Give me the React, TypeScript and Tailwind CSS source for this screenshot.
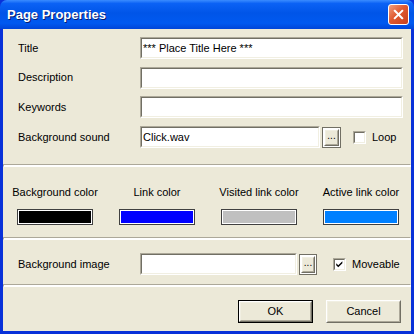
import React from "react";

const font = { fontFamily: '"Liberation Sans", Arial, sans-serif' };

function Sunken({ className = "", children }: { className?: string; children?: React.ReactNode }) {
  return (
    <div className={`border border-t-[#ACA899] border-l-[#ACA899] border-b-white border-r-white ${className}`}>
      <div className="h-full w-full border border-t-[#716F64] border-l-[#716F64] border-b-[#F1EFE2] border-r-[#F1EFE2] bg-white">
        {children}
      </div>
    </div>
  );
}

function TextBox({ className = "", value }: { className?: string; value?: string }) {
  return (
    <Sunken className={`h-[22px] ${className}`}>
      <div className="flex h-full items-center pl-[1px] text-[11px] leading-none text-black">
        {value}
      </div>
    </Sunken>
  );
}

function Raised({ className = "", children }: { className?: string; children?: React.ReactNode }) {
  return (
    <div className={`border border-t-white border-l-white border-b-[#716F64] border-r-[#716F64] ${className}`}>
      <div className="flex h-full w-full items-center justify-center border border-t-[#F1EFE2] border-l-[#F1EFE2] border-b-[#ACA899] border-r-[#ACA899] bg-[#ECE9D8]">
        {children}
      </div>
    </div>
  );
}

function Browse({ className = "" }: { className?: string }) {
  return (
    <div className={`border border-[#716F64] bg-white p-[1px] ${className}`}>
      <Raised className="h-full w-full">
        <span className="pb-[3px] text-[10px] leading-none text-black">...</span>
      </Raised>
    </div>
  );
}

function Check({ checked }: { checked?: boolean }) {
  return (
    <Sunken className="h-[13px] w-[13px]">
      {checked && (
        <svg viewBox="0 0 11 11" className="h-full w-full">
          <path d="M1.5 4 L4 6.5 L9 1.5 L9 4 L4 9 L1.5 6.5 Z" fill="#000" />
        </svg>
      )}
    </Sunken>
  );
}

function Separator() {
  return (
    <div className="h-[3px] w-full border border-[#ACA899] border-r-white border-b-white bg-white" />
  );
}

function Swatch({ color }: { color: string }) {
  return (
    <div className="h-[16px] w-[76px] border border-[#404040] bg-white p-[1px]">
      <div className="h-full w-full" style={{ backgroundColor: color }} />
    </div>
  );
}

const colors = [
  { label: "Background color", color: "#000000" },
  { label: "Link color", color: "#0000FF" },
  { label: "Visited link color", color: "#C0C0C0" },
  { label: "Active link color", color: "#0080FF" },
];

export default function App() {
  return (
    <div className="flex h-[334px] w-[414px] flex-col overflow-hidden bg-[#0831D9] text-[11px] text-black" style={font}>
      {/* Title bar */}
      <div className="flex h-[29px] shrink-0 items-center justify-between rounded-t-[7px] bg-[linear-gradient(180deg,#3A8CFF_0%,#0B62F5_12%,#0055E8_45%,#0059F0_80%,#0045D8_100%)] pl-[7px] pr-[5px]">
        <span className="text-[13px] font-bold text-white [text-shadow:1px_1px_#0A1E6E]">Page Properties</span>
        <div className="flex h-[21px] w-[21px] items-center justify-center rounded-[3px] border border-white bg-[linear-gradient(135deg,#F0A080_0%,#E05A30_45%,#C8401C_100%)]">
          <svg viewBox="0 0 12 12" className="h-[11px] w-[11px]">
            <path d="M2 2 L10 10 M10 2 L2 10" stroke="#fff" strokeWidth="2.2" strokeLinecap="square" />
          </svg>
        </div>
      </div>

      {/* Body */}
      <div className="mx-[3px] mb-[3px] flex flex-1 flex-col bg-[#ECE9D8]">
        <div className="flex flex-col gap-[7.7px] pt-[8px] pr-[8px]">
          {[
            { label: "Title", value: "*** Place Title Here ***" },
            { label: "Description" },
            { label: "Keywords" },
          ].map((r) => (
            <div key={r.label} className="flex items-center">
              <span className="w-[137px] shrink-0 pl-[15px]">{r.label}</span>
              <TextBox className="flex-1" value={r.value} />
            </div>
          ))}
          <div className="flex items-center">
            <span className="w-[137px] shrink-0 pl-[15px]">Background sound</span>
            <TextBox className="w-[180px]" value="Click.wav" />
            <Browse className="ml-[2px] h-[21px] w-[19px]" />
            <div className="ml-[12px] flex items-center gap-[6px]">
              <Check />
              <span>Loop</span>
            </div>
          </div>
        </div>

        <div className="mt-[16px]">
          <Separator />
        </div>

        <div className="mt-[19px] grid grid-cols-[102px_102px_102px_102px] pl-[1px]">
          {colors.map((c) => (
            <div key={c.label} className="flex flex-col items-center">
              <span className="leading-[13px]">{c.label}</span>
              <div className="mt-[10px]">
                <Swatch color={c.color} />
              </div>
            </div>
          ))}
        </div>

        <div className="mt-[12px]">
          <Separator />
        </div>

        <div className="mt-[13px] flex items-center">
          <span className="w-[137px] shrink-0 pl-[15px]">Background image</span>
          <TextBox className="w-[157px]" />
          <Browse className="ml-[2px] h-[21px] w-[18px]" />
          <div className="ml-[16px] flex items-center gap-[6px]">
            <Check checked />
            <span>Moveable</span>
          </div>
        </div>

        <div className="mt-[9px]">
          <Separator />
        </div>

        <div className="mt-[13px] flex justify-end gap-[13px] pr-[10px]">
          <div className="h-[23px] w-[75px] border border-black">
            <Raised className="h-full w-full">
              <span>OK</span>
            </Raised>
          </div>
          <Raised className="h-[23px] w-[75px]">
            <span>Cancel</span>
          </Raised>
        </div>
      </div>
    </div>
  );
}
